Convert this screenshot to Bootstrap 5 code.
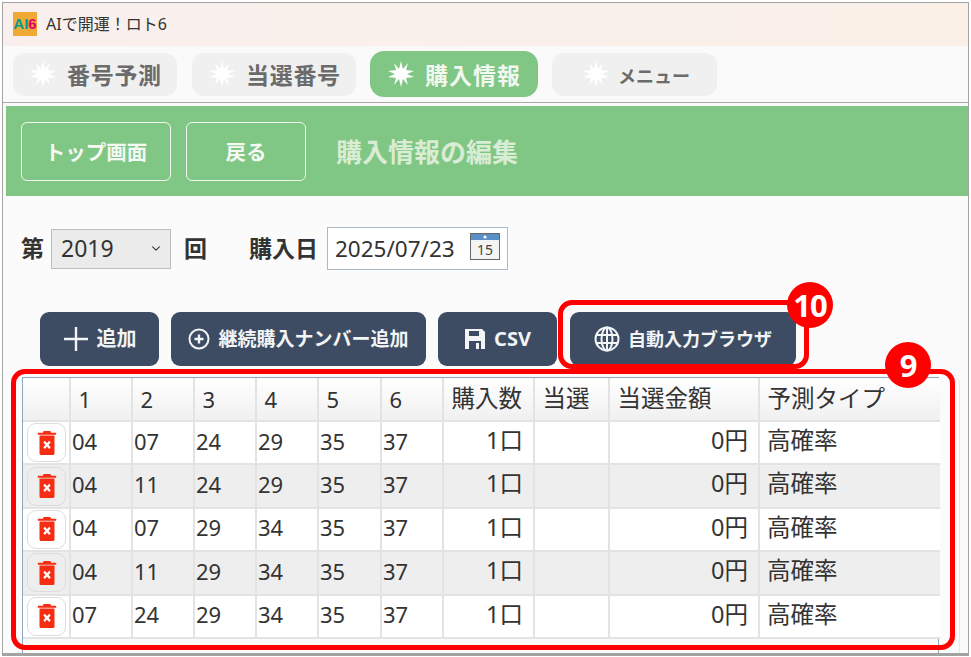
<!DOCTYPE html>
<html lang="ja"><head><meta charset="utf-8"><title>AIで開運！ロト6</title>
<link href="https://cdn.jsdelivr.net/npm/bootstrap@5.3.0/dist/css/bootstrap.min.css" rel="stylesheet">
<style>
html,body{margin:0;background:#fff;overflow:hidden}
body{font-family:"Noto Sans","Noto Sans CJK JP",sans-serif;color:#333;width:971px;height:657px}
.appframe{position:relative;margin:2px 0 0 2px;width:967px;height:654px;border:1px solid #a3a3a3;border-bottom-width:3px;background:#fbfbfb;overflow:hidden}
.titlebar{height:43px;background:linear-gradient(90deg,#f9f0ee,#faf0e8);font-size:16px;padding:0 0 2px 10px;gap:9px;color:#333}
.logobox{width:24px;height:24px;background:#f0a935;font:700 15px/24px "Liberation Sans",sans-serif;text-align:center;overflow:hidden;white-space:nowrap}
.logobox .la{color:#009a94}.logobox .lb{color:#e3006e}
.tabbar{height:57px;padding-left:10px;gap:15px;background:#fafafa;border-bottom:1px solid #a8a8a8}
.tabitem{width:164px;height:43px;border-radius:12px;background:#f0f0f0;color:#6b6b6b;font-size:23px;font-weight:700;gap:11px;padding-left:17px;line-height:1;letter-spacing:.7px}
.tabitem span{padding-top:3px}
.tabitem.curtab{width:168px;height:46px;margin:0 -1px;background:#80c684;color:#f1f8ef;border-radius:14px;padding-left:18px;letter-spacing:1px}
.tabitem.shorttab{width:165px;padding-left:31px;gap:9px;letter-spacing:0;font-size:18px}
.greenbar{height:90px;margin:3px 0 0 3px;background:#80c684;padding-left:15px;gap:15px}
.gbtn{height:59px;border:1px solid #f2f7f0;border-radius:6px;background:transparent;color:#f4f9f2;font-weight:700;font-size:20.500px;padding:3px 0 0;line-height:1}
.gbtn.w1{width:150px}.gbtn.w2{width:120px}
.gtitle{font-size:26px;font-weight:700;color:#d9ecd4;margin-left:15px;padding-top:2px}
.formline{height:43px;margin-top:31px;padding-left:18px;font-size:23px;font-weight:700;color:#333}
.yearsel{width:120px;height:40px;margin:0 13px 0 7px;padding:0 0 0 9px;border:1px solid #bdbdbd;border-radius:0;background-color:#ebebeb;font-size:23px;font-weight:400;color:#333;background-size:12px 9px;background-position:right 8px center}
.daylabel{margin-left:42px}
.datebox{width:181px;height:43px;margin-left:9px;border:1px solid #a9bacb;background:#fff;padding-left:7px;font-weight:400;font-size:22.500px}
.datebox svg{margin-left:auto;margin-right:7px;margin-top:-4px;flex:none}
.toolline{height:54px;margin-top:42px;padding-left:37px}
.dbtn{height:54px;background:#3d4c63;color:#f2f4f6;border:0;border-radius:9px;font-size:20px;font-weight:700;padding:0;gap:8px;line-height:1}
.dbtn:hover{background:#3d4c63;color:#f2f4f6}
.dw1{width:119px;margin-right:12px}.dw2{width:255px;margin-right:12px;font-size:19px}.dw3{width:119px;margin-right:13px}.dw4{width:226px;font-size:18px}
.tblpanel{margin:11px 8px 0 19px;height:276px;padding-right:20px;border-right:1px solid #e6e6e6;border-top-right-radius:6px}
.tblwrap{height:100%;border:1px solid #8ea6c0;border-bottom:0;background:#fafafa}
.dtable{table-layout:fixed;width:917px;margin:0;font-size:22px;border-collapse:collapse;--bs-table-bg:#fff;--bs-table-color:#333}
.dtable th{height:43px;padding:0 0 0 7.500px;font-weight:400;border:2px solid #e3e3e3;border-top:0;background:linear-gradient(#fff,#f0f0f0);vertical-align:middle;line-height:1;box-shadow:none}
.dtable th:first-child,.dtable td:first-child{border-left:0}
.dtable th:last-child,.dtable td:last-child{border-right:0}
.dtable td{height:43.4px;padding:0 0 4px 1px;border:2px solid #e3e3e3;border-top:0;vertical-align:middle;line-height:1}
.dtable tbody tr:nth-child(even){--bs-table-bg:#eeeeee}
.dtable td:first-child{padding:0 0 0 3px}
.dtable td.rnum{text-align:right;padding:0 10px 4px 0}
.dtable td.tname{padding-left:7px}
.cjkbig{font-size:23.500px}
.trashbtn{width:39px;height:39px;margin-left:1px;padding:0;border:1px solid #dcdcdc;border-radius:9px;background:transparent;display:flex;align-items:center;justify-content:center}
.redmark{position:absolute;border:5px solid #f00;border-radius:14px;pointer-events:none}
.mark9{left:8px;top:366px;width:944px;height:281px}
.mark10{left:555px;top:297px;width:251px;height:69px}
.redcircle{position:absolute;width:46px;height:46px;border-radius:50%;background:#f00;color:#fff;font-size:31px;font-weight:700;display:flex;align-items:center;justify-content:center;line-height:1;letter-spacing:-1px}
.circ9{left:882px;top:339px}.circ10{left:784px;top:279px}
</style></head><body>
<div class="appframe">
  <div class="titlebar d-flex align-items-center">
    <div class="logobox"><span class="la">AI</span><span class="lb">6</span></div><span>AIで開運！ロト6</span>
  </div>
  <div class="tabbar d-flex align-items-center">
    <div class="tabitem d-flex align-items-center"><svg width="26" height="26" viewBox="0 0 26 26"><path fill="#fff" d="M13 0l2 8 5-6-2 7 8 1-7 3 7 3-8 1 2 7-5-6-2 8-2-8-5 6 2-7-8-1 7-3-7-3 8-1-2-7 5 6z"/></svg><span>番号予測</span></div>
    <div class="tabitem d-flex align-items-center"><svg width="26" height="26" viewBox="0 0 26 26"><path fill="#fff" d="M13 0l2 8 5-6-2 7 8 1-7 3 7 3-8 1 2 7-5-6-2 8-2-8-5 6 2-7-8-1 7-3-7-3 8-1-2-7 5 6z"/></svg><span>当選番号</span></div>
    <div class="tabitem curtab d-flex align-items-center"><svg width="26" height="26" viewBox="0 0 26 26"><path fill="#fff" d="M13 0l2 8 5-6-2 7 8 1-7 3 7 3-8 1 2 7-5-6-2 8-2-8-5 6 2-7-8-1 7-3-7-3 8-1-2-7 5 6z"/></svg><span>購入情報</span></div>
    <div class="tabitem shorttab d-flex align-items-center"><svg width="26" height="26" viewBox="0 0 26 26"><path fill="#fff" d="M13 0l2 8 5-6-2 7 8 1-7 3 7 3-8 1 2 7-5-6-2 8-2-8-5 6 2-7-8-1 7-3-7-3 8-1-2-7 5 6z"/></svg><span>メニュー</span></div>
  </div>
  <div class="greenbar d-flex align-items-center">
    <button class="btn gbtn w1">トップ画面</button>
    <button class="btn gbtn w2">戻る</button>
    <span class="gtitle">購入情報の編集</span>
  </div>
  <div class="formline d-flex align-items-center">
    <span>第</span>
    <select class="form-select yearsel"><option>2019</option></select>
    <span>回</span>
    <span class="daylabel">購入日</span>
    <div class="datebox d-flex align-items-center"><span>2025/07/23</span>
      <svg width="30" height="27" viewBox="0 0 30 27"><rect x=".5" y=".5" width="29" height="26" fill="#f4f4f4" stroke="#666"/><rect x="1" y="1" width="28" height="6" fill="#5b8fc7"/><circle cx="15" cy="4" r="1.500" fill="#fff"/><text x="15" y="22" font-size="14" text-anchor="middle" fill="#444" font-family="Noto Sans, sans-serif">15</text></svg>
    </div>
  </div>
  <div class="toolline d-flex">
    <button class="btn dbtn dw1 d-flex align-items-center justify-content-center"><svg width="26" height="26" viewBox="0 0 26 26"><path fill="none" stroke="#f2f4f6" stroke-width="2.400" d="M13 1v24M1 13h24"/></svg><span>追加</span></button>
    <button class="btn dbtn dw2 d-flex align-items-center justify-content-center"><svg width="22" height="22" viewBox="0 0 22 22"><circle cx="11" cy="11" r="9.500" fill="none" stroke="#f2f4f6" stroke-width="2"/><path stroke="#f2f4f6" stroke-width="2.400" d="M11 6.500v9M6.500 11h9"/></svg><span>継続購入ナンバー追加</span></button>
    <button class="btn dbtn dw3 d-flex align-items-center justify-content-center"><svg width="22" height="22" viewBox="0 0 22 22"><path fill="#f2f4f6" d="M1 1h17l3 3v17H1z"/><path fill="#3d4c63" d="M5 3h10v5H5zM5 13h12v8H5z"/><path fill="#f2f4f6" d="M12 15h3v6h-3z"/></svg><span>CSV</span></button>
    <button class="btn dbtn dw4 d-flex align-items-center justify-content-center"><svg width="26" height="26" viewBox="0 0 26 26" fill="none" stroke="#f2f4f6" stroke-width="2"><circle cx="13" cy="13" r="11.500"/><ellipse cx="13" cy="13" rx="5.500" ry="11.500"/><path d="M13 1.500v23M2 9h22M2 17h22"/></svg><span>自動入力ブラウザ</span></button>
  </div>
  <div class="tblpanel">
    <div class="tblwrap">
      <table class="table dtable">
        <colgroup><col style="width:47px"><col style="width:62px"><col style="width:62px"><col style="width:62px"><col style="width:62px"><col style="width:63px"><col style="width:62px"><col style="width:91px"><col style="width:75px"><col style="width:150px"><col style="width:181px"></colgroup>
        <thead><tr><th></th><th>1</th><th>2</th><th>3</th><th>4</th><th>5</th><th>6</th><th class="cjkbig">購入数</th><th class="cjkbig">当選</th><th class="cjkbig">当選金額</th><th class="cjkbig">予測タイプ</th></tr></thead>
        <tbody>
          <tr><td><button class="trashbtn"><svg width="20" height="24" viewBox="0 0 24 26" preserveAspectRatio="none"><path fill="#f62d12" d="M8 0h8l1 2h6v2H1V2h6zM3 5h18v19a2 2 0 0 1-2 2H5a2 2 0 0 1-2-2z"/><path stroke="#fff" stroke-width="2.600" d="M8.500 11.500l7 7M15.500 11.500l-7 7"/></svg></button></td><td>04</td><td>07</td><td>24</td><td>29</td><td>35</td><td>37</td><td class="rnum cjkbig">1口</td><td></td><td class="rnum cjkbig">0円</td><td class="tname cjkbig">高確率</td></tr>
          <tr><td><button class="trashbtn"><svg width="20" height="24" viewBox="0 0 24 26" preserveAspectRatio="none"><path fill="#f62d12" d="M8 0h8l1 2h6v2H1V2h6zM3 5h18v19a2 2 0 0 1-2 2H5a2 2 0 0 1-2-2z"/><path stroke="#fff" stroke-width="2.600" d="M8.500 11.500l7 7M15.500 11.500l-7 7"/></svg></button></td><td>04</td><td>11</td><td>24</td><td>29</td><td>35</td><td>37</td><td class="rnum cjkbig">1口</td><td></td><td class="rnum cjkbig">0円</td><td class="tname cjkbig">高確率</td></tr>
          <tr><td><button class="trashbtn"><svg width="20" height="24" viewBox="0 0 24 26" preserveAspectRatio="none"><path fill="#f62d12" d="M8 0h8l1 2h6v2H1V2h6zM3 5h18v19a2 2 0 0 1-2 2H5a2 2 0 0 1-2-2z"/><path stroke="#fff" stroke-width="2.600" d="M8.500 11.500l7 7M15.500 11.500l-7 7"/></svg></button></td><td>04</td><td>07</td><td>29</td><td>34</td><td>35</td><td>37</td><td class="rnum cjkbig">1口</td><td></td><td class="rnum cjkbig">0円</td><td class="tname cjkbig">高確率</td></tr>
          <tr><td><button class="trashbtn"><svg width="20" height="24" viewBox="0 0 24 26" preserveAspectRatio="none"><path fill="#f62d12" d="M8 0h8l1 2h6v2H1V2h6zM3 5h18v19a2 2 0 0 1-2 2H5a2 2 0 0 1-2-2z"/><path stroke="#fff" stroke-width="2.600" d="M8.500 11.500l7 7M15.500 11.500l-7 7"/></svg></button></td><td>04</td><td>11</td><td>29</td><td>34</td><td>35</td><td>37</td><td class="rnum cjkbig">1口</td><td></td><td class="rnum cjkbig">0円</td><td class="tname cjkbig">高確率</td></tr>
          <tr><td><button class="trashbtn"><svg width="20" height="24" viewBox="0 0 24 26" preserveAspectRatio="none"><path fill="#f62d12" d="M8 0h8l1 2h6v2H1V2h6zM3 5h18v19a2 2 0 0 1-2 2H5a2 2 0 0 1-2-2z"/><path stroke="#fff" stroke-width="2.600" d="M8.500 11.500l7 7M15.500 11.500l-7 7"/></svg></button></td><td>07</td><td>24</td><td>29</td><td>34</td><td>35</td><td>37</td><td class="rnum cjkbig">1口</td><td></td><td class="rnum cjkbig">0円</td><td class="tname cjkbig">高確率</td></tr>
        </tbody>
      </table>
    </div>
  </div>
  <div class="redmark mark9"></div>
  <div class="redmark mark10"></div>
  <div class="redcircle circ9">9</div>
  <div class="redcircle circ10">10</div>
</div>
<script src="https://cdn.jsdelivr.net/npm/bootstrap@5.3.0/dist/js/bootstrap.bundle.min.js"></script>
</body></html>
